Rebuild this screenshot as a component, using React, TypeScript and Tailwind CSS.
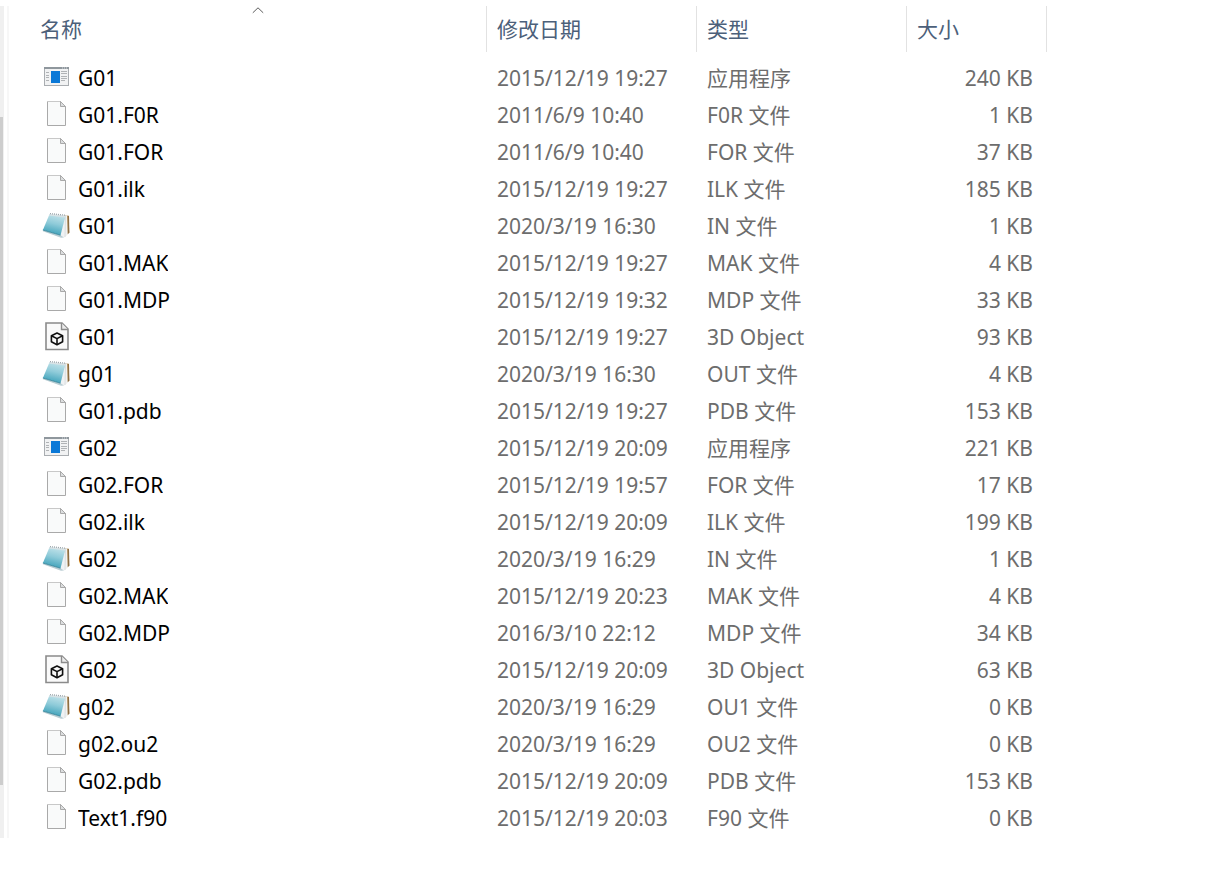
import clsx from "clsx";

type FileKind = "app" | "blank" | "notepad" | "object3d";

interface FileEntry {
    kind: FileKind;
    name: string;
    modified: string;
    type: string;
    size: string;
}

const files: FileEntry[] = [
    { kind: "app", name: "G01", modified: "2015/12/19 19:27", type: "应用程序", size: "240 KB" },
    { kind: "blank", name: "G01.F0R", modified: "2011/6/9 10:40", type: "F0R 文件", size: "1 KB" },
    { kind: "blank", name: "G01.FOR", modified: "2011/6/9 10:40", type: "FOR 文件", size: "37 KB" },
    { kind: "blank", name: "G01.ilk", modified: "2015/12/19 19:27", type: "ILK 文件", size: "185 KB" },
    { kind: "notepad", name: "G01", modified: "2020/3/19 16:30", type: "IN 文件", size: "1 KB" },
    { kind: "blank", name: "G01.MAK", modified: "2015/12/19 19:27", type: "MAK 文件", size: "4 KB" },
    { kind: "blank", name: "G01.MDP", modified: "2015/12/19 19:32", type: "MDP 文件", size: "33 KB" },
    { kind: "object3d", name: "G01", modified: "2015/12/19 19:27", type: "3D Object", size: "93 KB" },
    { kind: "notepad", name: "g01", modified: "2020/3/19 16:30", type: "OUT 文件", size: "4 KB" },
    { kind: "blank", name: "G01.pdb", modified: "2015/12/19 19:27", type: "PDB 文件", size: "153 KB" },
    { kind: "app", name: "G02", modified: "2015/12/19 20:09", type: "应用程序", size: "221 KB" },
    { kind: "blank", name: "G02.FOR", modified: "2015/12/19 19:57", type: "FOR 文件", size: "17 KB" },
    { kind: "blank", name: "G02.ilk", modified: "2015/12/19 20:09", type: "ILK 文件", size: "199 KB" },
    { kind: "notepad", name: "G02", modified: "2020/3/19 16:29", type: "IN 文件", size: "1 KB" },
    { kind: "blank", name: "G02.MAK", modified: "2015/12/19 20:23", type: "MAK 文件", size: "4 KB" },
    { kind: "blank", name: "G02.MDP", modified: "2016/3/10 22:12", type: "MDP 文件", size: "34 KB" },
    { kind: "object3d", name: "G02", modified: "2015/12/19 20:09", type: "3D Object", size: "63 KB" },
    { kind: "notepad", name: "g02", modified: "2020/3/19 16:29", type: "OU1 文件", size: "0 KB" },
    { kind: "blank", name: "g02.ou2", modified: "2020/3/19 16:29", type: "OU2 文件", size: "0 KB" },
    { kind: "blank", name: "G02.pdb", modified: "2015/12/19 20:09", type: "PDB 文件", size: "153 KB" },
    { kind: "blank", name: "Text1.f90", modified: "2015/12/19 20:03", type: "F90 文件", size: "0 KB" },
];

const columns = ["名称", "修改日期", "类型", "大小"];

function FileIcon({ kind }: { kind: FileKind }) {
    return (
        <svg viewBox="0 0 28 30" className="h-[30px] w-7 shrink-0" aria-hidden="true">
            {kind === "app" && (
                <>
                    <rect x="2.5" y="4.5" width="24" height="18" fill="#f1f2f3" stroke="#a9adb1" />
                    <path d="M2 4h25v2H2z" fill="#8f979d" />
                    <path d="M20 4.5h1v1h-1zM22 4.5h1v1h-1zM24 4.5h1v1h-1z" fill="#d5dadd" />
                    <path
                        d="M4 9.5h3M4 12.5h3M4 14.5h3M4 17.5h3M19 8.5h6M19 10.5h6M19 13.5h6M19 15.5h6M19 17.5h4"
                        stroke="#b0b3b6"
                    />
                    <path d="M9 8h9v12H9z" fill="#0a78d7" />
                </>
            )}
            {kind === "blank" && (
                <>
                    <path d="M5.5 1.5h13l5 5v19h-18z" fill="#f9fafa" stroke="#a9a9a9" />
                    <path d="M5 1.5h13" stroke="#c8c8c8" />
                    <path d="M18.5 1.5v5h5z" fill="#dcdedf" stroke="#a9a9a9" />
                </>
            )}
            {kind === "notepad" && (
                <>
                    <defs>
                        <linearGradient id="notepadCover" x1="0.6" y1="0" x2="0.35" y2="1">
                            <stop offset="0" stopColor="#c3e3ea" />
                            <stop offset="0.45" stopColor="#8fcbd9" />
                            <stop offset="0.8" stopColor="#56aec3" />
                            <stop offset="1" stopColor="#3e9db5" />
                        </linearGradient>
                    </defs>
                    <path d="M22.5 4l4 .8.7 16.7-4.7 4.2z" fill="#b08d5b" />
                    <path d="M26 4.8l1 .3.4 16.4-1.4 1.4z" fill="#8c6d43" />
                    <path d="M23.5 4l1.5.5.6 18.8-3.6 3.4-4-2.7z" fill="#f0f2f3" />
                    <path d="M23.5 5.5l-.5 20.5" stroke="#cfd6d9" strokeWidth="0.7" />
                    <path d="M7.5 3.2L23.5 5l-5 19.2L.9 19z" fill="url(#notepadCover)" />
                    <path d="M.9 19l17.6 5.2 3.5 2.3-3 .2L.9 20.3z" fill="#b9cdd3" />
                    <path d="M.9 19l17.6 5.2" stroke="#2f8198" strokeWidth="0.8" />
                    <path d="M7.5 3L23.5 4.6l-.5 1.8L7 4.6z" fill="#d8e2e5" />
                    <path d="M8 2.6l15.5 1.6" stroke="#9ca6ab" strokeWidth="1.3" strokeDasharray="1 1" />
                </>
            )}
            {kind === "object3d" && (
                <>
                    <path d="M4 1h16l6 6v20.5H4z" fill="#fafafa" stroke="#8b8b8b" strokeWidth="1.6" />
                    <path d="M19.5 1v6.5H26" fill="#ececec" stroke="#8b8b8b" strokeWidth="1.4" />
                    <g fill="none" stroke="#111111" strokeWidth="1.6" strokeLinejoin="round">
                        <path d="M15 11l5.6 2.7v6.1L15 22.8l-5.6-3v-6.1z" />
                        <path d="M9.4 13.7l5.6 2.9 5.6-2.9M15 16.6v6.2" />
                    </g>
                </>
            )}
        </svg>
    );
}

/** Position indicator of the folder tree on the left edge. */
function PaneScrollbar() {
    return (
        <div className="flex w-1 shrink-0 flex-col bg-[#f0f0f0]" aria-hidden="true">
            <div className="flex-[111]" />
            <div className="mr-px flex-[668] bg-[#cdcdcd]" />
            <div className="flex-[53]" />
        </div>
    );
}

export default function App() {
    return (
        <div className="min-h-screen bg-white pt-1.5 font-['Noto_Sans','Noto_Sans_CJK_SC',sans-serif] text-[21px] leading-7 text-[#6d6d6d]">
            <main className="flex">
                <PaneScrollbar />
                <div className="ml-[3px] w-0.5 shrink-0 bg-[#f7f7f7]" />
                <div className="min-w-0 flex-1 pb-0.5 pl-[21px]">
                    <table className="w-full table-fixed border-separate border-spacing-0 text-left">
                        <colgroup>
                            <col className="w-[457px]" />
                            <col className="w-[210px]" />
                            <col className="w-[210px]" />
                            <col className="w-[140px]" />
                            <col />
                        </colgroup>
                        <thead>
                            <tr>
                                {columns.map((label, i) => (
                                    <th key={label} scope="col" className="p-0 pb-[7px] font-normal">
                                        <button
                                            type="button"
                                            className="relative flex h-[46px] w-full items-center border-r border-[#e2e2e2] pl-2.5 text-[#4c607a]"
                                        >
                                            {label}
                                            {i === 0 && (
                                                <svg
                                                    viewBox="0 0 12 7"
                                                    className="absolute top-px left-1/2 h-[7px] w-3 -translate-x-1/2"
                                                    aria-hidden="true"
                                                >
                                                    <path d="M0.8 5.8L6 0.8l5.2 5" fill="none" stroke="#5c5c5c" />
                                                </svg>
                                            )}
                                        </button>
                                    </th>
                                ))}
                                <td />
                            </tr>
                        </thead>
                        <tbody>
                            {files.map((file, i) => (
                                <tr key={i} className="h-[37px]">
                                    <td className="p-0 pl-3">
                                        <div className="flex items-center gap-2 text-black">
                                            <FileIcon kind={file.kind} />
                                            <span className="truncate">{file.name}</span>
                                        </div>
                                    </td>
                                    {[file.modified, file.type, file.size].map((text, col) => (
                                        <td
                                            key={col}
                                            className={clsx("truncate p-0", col === 2 ? "pr-3.5 text-right" : "pl-2.5")}
                                        >
                                            {text}
                                        </td>
                                    ))}
                                    <td />
                                </tr>
                            ))}
                        </tbody>
                    </table>
                </div>
            </main>
        </div>
    );
}
